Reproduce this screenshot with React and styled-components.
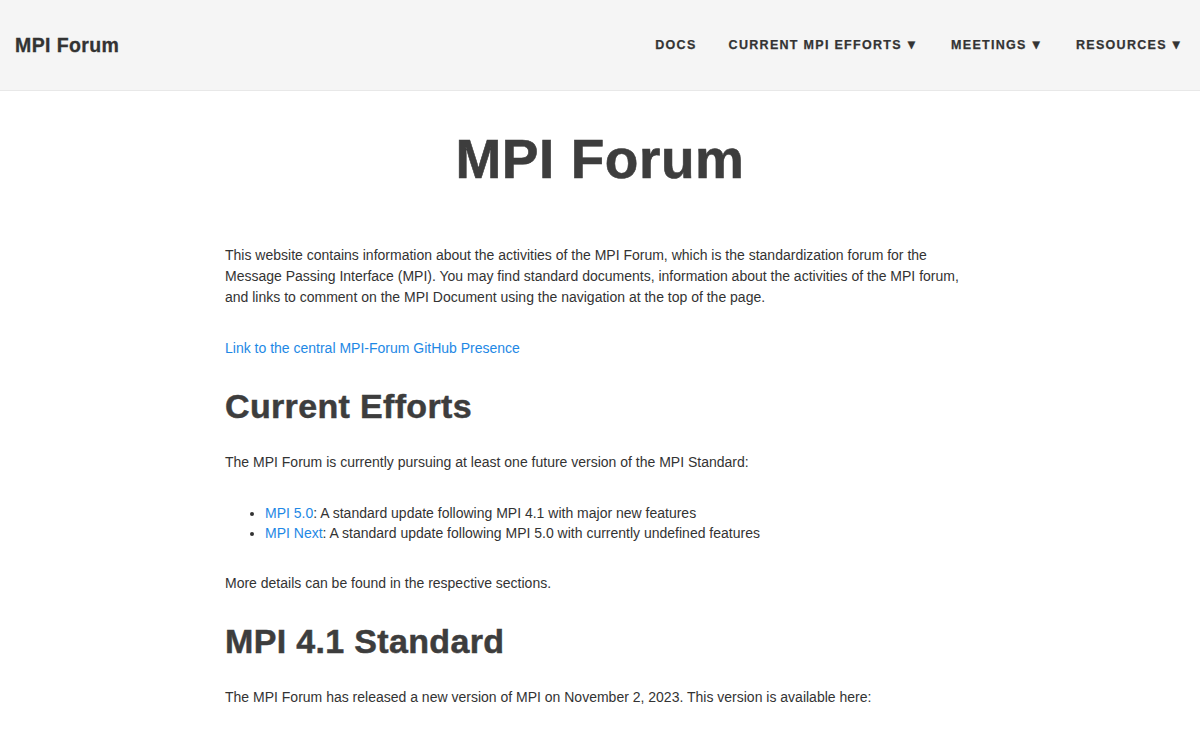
import React from 'react'
import styled, { createGlobalStyle } from 'styled-components'

const GlobalStyle = createGlobalStyle`
    html, body {
        margin: 0;
        padding: 0;
        background: #ffffff;
    }
    body {
        font-family: "Liberation Sans", Arial, Helvetica, sans-serif;
        color: #333333;
        font-size: 14px;
        line-height: 21px;
    }
`

const Header = styled.header`
    height: 90px;
    background-color: #f5f5f5;
    border-bottom: 1px solid #e8e8e8;
    display: flex;
    align-items: center;
    justify-content: space-between;
    padding-left: 15px;
`

const SiteTitle = styled.a`
    font-size: 19.5px;
    font-weight: 700;
    letter-spacing: 0.02em;
    color: #333333;
    text-decoration: none;
    -webkit-text-stroke: 0.3px #333333;
`

const Nav = styled.nav`
    display: flex;
    align-items: center;
`

const NavItem = styled.a`
    padding: 0 16px;
    font-size: 12.5px;
    font-weight: 700;
    letter-spacing: 1.3px;
    text-transform: uppercase;
    color: #333333;
    text-decoration: none;
    white-space: nowrap;
    -webkit-text-stroke: 0.25px #333333;
`

const Caret = styled.span`
    margin-left: 3px;
    font-size: 13px;
`

const Main = styled.main`
    width: 750px;
    margin: 0 auto;
    padding-top: 37px;
`

const Title = styled.h1`
    margin: 0 0 55px;
    text-align: center;
    font-size: 55px;
    line-height: 62px;
    font-weight: 700;
    letter-spacing: 0.01em;
    color: #3d3d3d;
    -webkit-text-stroke: 0.6px #3d3d3d;
`

const Heading = styled.h2`
    margin: 30px 0 29px;
    font-size: 34px;
    line-height: 34px;
    font-weight: 700;
    letter-spacing: 0.01em;
    color: #3d3d3d;
    -webkit-text-stroke: 0.5px #3d3d3d;
`

const P = styled.p`
    margin: 0 0 30px;
`

const Link = styled.a`
    color: #1e88e5;
    text-decoration: none;
`

const List = styled.ul`
    margin: 0 0 30px;
    padding-left: 40px;
`

const Item = styled.li`
    line-height: 20px;
`

const navLinks = [
    { label: 'Docs' },
    { label: 'Current MPI Efforts', drop: true },
    { label: 'Meetings', drop: true },
    { label: 'Resources', drop: true },
]

const App = () => {
  return (
    <>
        <GlobalStyle />
        <Header>
            <SiteTitle href="#">MPI Forum</SiteTitle>
            <Nav>
                {navLinks.map(n => (
                    <NavItem key={n.label} href="#">
                        {n.label}{n.drop && <Caret>▼</Caret>}
                    </NavItem>
                ))}
            </Nav>
        </Header>

        <Main>
            <Title>MPI Forum</Title>
            <P>
                This website contains information about the activities of the MPI Forum, which is the standardization forum for the
                Message Passing Interface (MPI). You may find standard documents, information about the activities of the MPI forum,
                and links to comment on the MPI Document using the navigation at the top of the page.
            </P>
            <P><Link href="#">Link to the central MPI-Forum GitHub Presence</Link></P>

            <Heading>Current Efforts</Heading>
            <P>The MPI Forum is currently pursuing at least one future version of the MPI Standard:</P>
            <List>
                <Item><Link href="#">MPI 5.0</Link>: A standard update following MPI 4.1 with major new features</Item>
                <Item><Link href="#">MPI Next</Link>: A standard update following MPI 5.0 with currently undefined features</Item>
            </List>
            <P>More details can be found in the respective sections.</P>

            <Heading>MPI 4.1 Standard</Heading>
            <P>The MPI Forum has released a new version of MPI on November 2, 2023. This version is available here:</P>
        </Main>
    </>
  )
}

export default App
